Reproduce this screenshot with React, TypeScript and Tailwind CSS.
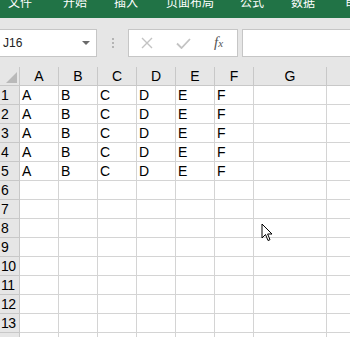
import React from "react";

const cols = [
  { n: "A", w: "w-[39px]" },
  { n: "B", w: "w-[39px]" },
  { n: "C", w: "w-[39px]" },
  { n: "D", w: "w-[39px]" },
  { n: "E", w: "w-[39px]" },
  { n: "F", w: "w-[39px]" },
  { n: "G", w: "w-[73px]" },
  { n: "H", w: "w-[60px]" },
];

const tabs = [
  { t: "文件", ml: "ml-[8px]" },
  { t: "开始", ml: "ml-[31px]" },
  { t: "插入", ml: "ml-[27px]" },
  { t: "页面布局", ml: "ml-[28px]" },
  { t: "公式", ml: "ml-[26px]" },
  { t: "数据", ml: "ml-[27px]" },
  { t: "审阅", ml: "ml-[30px]" },
];

const rows = Array.from({ length: 14 }, (_, i) => i + 1);

export default function App() {
  return (
    <div className="relative w-[350px] h-[337px] overflow-hidden bg-[#e6e6e6] font-['Liberation_Sans',Arial,sans-serif]">
      {/* ribbon */}
      <div className="h-[18px] bg-[#217346] overflow-hidden">
        <div className="flex w-[420px] whitespace-nowrap mt-[-4px] text-[12px] leading-[12px] text-white font-['Noto_Sans_CJK_SC',sans-serif]">
          {tabs.map((t) => (
            <span key={t.t} className={`${t.ml} shrink-0`}>
              {t.t}
            </span>
          ))}
        </div>
      </div>

      {/* formula bar */}
      <div className="flex items-start pt-[11px] h-[49px]">
        <div className="w-[97px] h-[28px] shrink-0 bg-white border border-[#c6c6c6] border-l-0 flex items-center justify-between pl-[3px] pr-[6px]">
          <span className="text-[12px] leading-[14px] text-[#222]">J16</span>
          <svg width="8" height="5" viewBox="0 0 8 5">
            <polygon points="0,0 8,0 4,4" fill="#6a6a6a" />
          </svg>
        </div>
        <div className="w-[31px] h-[28px] shrink-0 flex flex-col items-center justify-center gap-[2px] pl-[1px]">
          <span className="w-[2px] h-[2px] bg-[#b4b4b4]" />
          <span className="w-[2px] h-[2px] bg-[#b4b4b4]" />
          <span className="w-[2px] h-[2px] bg-[#b4b4b4]" />
        </div>
        <div className="w-[110px] h-[28px] shrink-0 bg-white border border-[#c6c6c6] flex items-center">
          <svg width="12" height="12" viewBox="0 0 12 12" className="ml-[12px]">
            <path d="M1 1 L11 11 M11 1 L1 11" stroke="#c3c3c3" strokeWidth="1.4" fill="none" />
          </svg>
          <svg width="15" height="11" viewBox="0 0 15 11" className="ml-[23px]">
            <path d="M1 5.5 L5.5 10 L14 1" stroke="#c3c3c3" strokeWidth="1.8" fill="none" />
          </svg>
          <span className="ml-[23px] text-[15px] leading-[15px] italic text-[#555] font-['Liberation_Serif',serif]">
            f<span className="text-[11px]">x</span>
          </span>
        </div>
        <div className="ml-[4px] w-[120px] h-[28px] shrink-0 bg-white border border-[#c6c6c6]" />
      </div>

      {/* sheet */}
      <div className="bg-white">
        {/* header row */}
        <div className="flex h-[19px] bg-[#e6e6e6] border-b border-[#c8c8c8]">
          <div className="w-[20px] shrink-0 border-r border-[#c8c8c8] flex items-end justify-end pr-[2px] pb-[2px]">
            <svg width="11" height="11" viewBox="0 0 11 11">
              <polygon points="11,0 11,11 0,11" fill="#b9b9b9" />
            </svg>
          </div>
          {cols.map((c) => (
            <div
              key={c.n}
              className={`${c.w} shrink-0 border-r border-[#c8c8c8] text-center text-[14px] leading-[15px] pt-[2px] text-black`}
            >
              {c.n}
            </div>
          ))}
        </div>
        {rows.map((r) => (
          <div key={r} className="flex h-[19px]">
            <div className="w-[20px] shrink-0 bg-[#e6e6e6] border-r border-b border-[#c8c8c8] text-[14px] leading-[15px] pt-[2px] pl-[1px] text-black tracking-[-0.5px]">
              {r}
            </div>
            {cols.map((c, ci) => (
              <div
                key={c.n}
                className={`${c.w} shrink-0 border-r border-b border-[#d4d4d4] text-[14px] leading-[15px] pt-[2px] pl-[2px] text-black`}
              >
                {r <= 5 && ci < 6 ? c.n : ""}
              </div>
            ))}
          </div>
        ))}
      </div>

      {/* mouse cursor */}
      <svg
        className="absolute left-[261px] top-[223px]"
        width="14"
        height="20"
        viewBox="0 0 14 20"
      >
        <path
          d="M1 1 L1 15 L4.5 11.5 L7 17.5 L9 16.7 L6.6 11 L11 11 Z"
          fill="white"
          stroke="black"
          strokeWidth="1"
          strokeLinejoin="miter"
        />
      </svg>
    </div>
  );
}
